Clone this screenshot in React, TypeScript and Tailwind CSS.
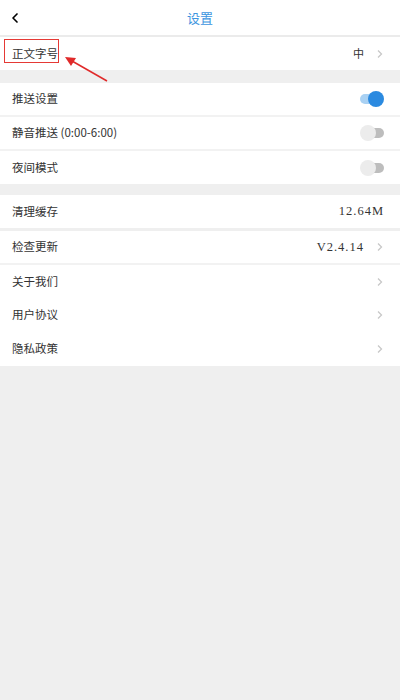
import { ChevronLeft } from "lucide-react"

const font = { fontFamily: '"Noto Sans CJK SC", "Liberation Serif", serif' }

function Chevron() {
  return (
    <svg width="8" height="10" viewBox="0 0 8 10" className="ml-3">
      <path d="M2 1.5 L5.5 5 L2 8.5" fill="none" stroke="#c8c8c8" strokeWidth="1.3" />
    </svg>
  )
}

function Toggle({ on }: { on: boolean }) {
  if (on) {
    return (
      <div className="relative h-[16px] w-[24px]">
        <div className="absolute left-0 top-[3px] h-[10px] w-[20px] rounded-full bg-[#a9d1f3]" />
        <div className="absolute right-0 top-0 h-[16px] w-[16px] rounded-full bg-[#2b8ae0]" />
      </div>
    )
  }
  return (
    <div className="relative h-[16px] w-[24px]">
      <div className="absolute right-0 top-[3px] h-[10px] w-[20px] rounded-full bg-[#bdbdbd]" />
      <div className="absolute left-0 top-0 h-[16px] w-[16px] rounded-full bg-[#ececec]" />
    </div>
  )
}

function Row({
  label,
  value,
  arrow,
  toggle,
  border,
  serif,
  h = "h-[33px]",
}: {
  label: string
  value?: string
  arrow?: boolean
  toggle?: "on" | "off"
  border?: boolean
  serif?: boolean
  h?: string
}) {
  return (
    <div className={`flex items-center justify-between bg-white pl-[12px] pr-[16px] ${h} ${border ? "border-b-2 border-[#f2f2f2]" : ""}`}>
      <span className="text-[11.5px] text-[#333]">{label}</span>
      <div className="flex items-center">
        {value && serif && (
          <span
            className="text-[12.5px] tracking-[1px] text-[#333]"
            style={{ fontFamily: '"Liberation Serif", "Noto Sans CJK SC", serif' }}
          >
            {value}
          </span>
        )}
        {value && !serif && <span className="text-[11px] text-[#333]">{value}</span>}
        {arrow && <Chevron />}
        {toggle && <Toggle on={toggle === "on"} />}
      </div>
    </div>
  )
}

export default function App() {
  return (
    <div className="relative h-[700px] w-[400px] bg-[#efefef]" style={font}>
      <div className="relative flex h-[37px] items-center justify-center border-b-2 border-[#ebebeb] bg-white">
        <ChevronLeft className="absolute left-[7px] top-[10px] h-[16px] w-[16px] text-black" strokeWidth={2.5} />
        <span className="text-[13px] text-[#3d95e0]">设置</span>
      </div>

      <div className="relative">
        <Row label="正文字号" value="中" arrow />
        <div className="absolute left-[4px] top-[2px] h-[24px] w-[55px] border-[1.5px] border-[#e53935]" />
      </div>

      <div className="h-[13px]" />
      <Row label="推送设置" toggle="on" border h="h-[34px]" />
      <Row label="静音推送 (0:00-6:00)" toggle="off" border h="h-[34px]" />
      <Row label="夜间模式" toggle="off" h="h-[33px]" />

      <div className="h-[11px]" />
      <Row label="清理缓存" value="12.64M" serif />
      <div className="h-[3px]" />
      <Row label="检查更新" value="V2.4.14" serif arrow border h="h-[34px]" />
      <Row label="关于我们" arrow h="h-[33px]" />
      <Row label="用户协议" arrow h="h-[34px]" />
      <Row label="隐私政策" arrow h="h-[34px]" />

      <svg className="absolute left-0 top-0" width="400" height="120" viewBox="0 0 400 120">
        <line x1="107" y1="81" x2="72" y2="61" stroke="#e02a2a" strokeWidth="1.6" />
        <path d="M65 57 L76 58 L71 66 Z" fill="#e02a2a" />
      </svg>
    </div>
  )
}
